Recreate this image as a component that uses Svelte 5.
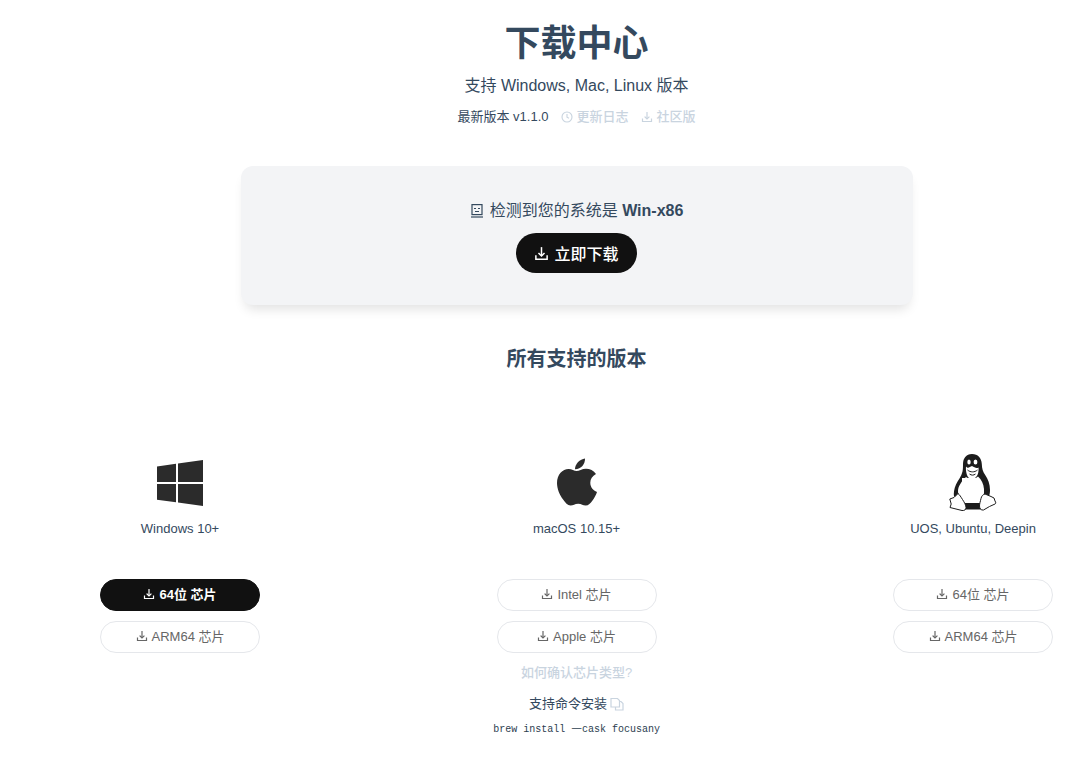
<script>
  const platforms = [
    { name: 'Windows 10+', icon: 'win', builds: [{ label: '64位 芯片', primary: true }, { label: 'ARM64 芯片' }] },
    { name: 'macOS 10.15+', icon: 'mac', builds: [{ label: 'Intel 芯片' }, { label: 'Apple 芯片' }], mac: true },
    { name: 'UOS, Ubuntu, Deepin', icon: 'linux', builds: [{ label: '64位 芯片' }, { label: 'ARM64 芯片' }] }
  ]
</script>

{#snippet dl(size)}
  <svg class="dl" width={size} height={size} viewBox="0 0 24 24" fill="none" stroke="currentColor" stroke-width="2.400" stroke-linecap="square">
    <path d="M3 16v5h18v-5" />
    <path d="M12 3v12" />
    <path d="M8 12l4 4 4-4" />
  </svg>
{/snippet}

<div class="page">
  <header class="head">
    <h1>下载中心</h1>
    <p class="sub">支持 Windows, Mac, Linux 版本</p>
    <div class="meta">
      <span class="ver">最新版本 v1.1.0</span>
      <a href="#log">
        <svg width="12" height="12" viewBox="0 0 24 24" fill="none" stroke="currentColor" stroke-width="2.200"><circle cx="12" cy="12" r="10" /><path d="M12 6v6.500l4 2" /></svg>
        更新日志
      </a>
      <a href="#ce">{@render dl(12)} 社区版</a>
    </div>
  </header>

  <section class="card">
    <div class="detect">
      <svg width="14" height="14" viewBox="0 0 14 14" fill="none" stroke="currentColor" stroke-width="1.200">
        <rect x="2" y="0.600" width="10" height="10" />
        <path d="M1 13h12" />
        <path d="M4 4.500h2M8 4.500h2M5 7.500h4" />
      </svg>
      <span>检测到您的系统是 <b>Win-x86</b></span>
    </div>
    <button class="cta">{@render dl(15)} 立即下载</button>
  </section>

  <h2>所有支持的版本</h2>

  <div class="platforms">
    {#each platforms as p}
      <div class="platform">
        <div class="icon">
          {#if p.icon === 'win'}
            <svg width="46" height="46" viewBox="0 0 46 46" fill="#2b2b2b">
              <path d="M0 6.400L19 3.800V22H0z" />
              <path d="M21 3.500L46 0v22H21z" />
              <path d="M0 24h19v18.300L0 39.700z" />
              <path d="M21 24h25v22l-25-3.500z" />
            </svg>
          {:else if p.icon === 'mac'}
            <svg class="apple" width="40" height="48" viewBox="0 0 40 48" fill="#2b2b2b">
              <path d="M20 0.500c.3 5.500-4 10.800-10 10.700C9.800 6 15 1 20 .5z" transform="translate(8 0)" />
              <path d="M19.500 13c2.500 0 5.500-2.300 9.500-2.300 3.800 0 7.800 1.900 10 5.300-3.700 2.200-5.700 4.900-5.700 8.700 0 4.500 2.800 7.700 6.700 9.200-1 3-2.500 5.800-4.500 8.500-2 2.800-4 5.100-6.800 5.100-2.900 0-4-1.800-7.500-1.800-3.600 0-4.900 1.800-7.700 1.800-3 0-5.100-2.600-7.400-6C2.500 37 0 30.500 0 25c0-8.500 5.600-14 11.600-14 3.200 0 5.800 2 7.900 2z" />
            </svg>
          {:else}
            <svg width="48" height="57" viewBox="0 0 48 57">
              <!-- back and wings -->
              <path fill="#1c1c1c" d="M23 0c6 0 9.500 4 9.800 10 .2 4.500 1 7.500 3.400 11 2.800 4 4.800 9 4.800 15 0 3-.5 5.500-1.500 7l-6.500 1.500-3-1.500V24H13v19l-4 1-4-1.500c-.5-3 0-7.500 2-12 2-4.500 5.500-8 6.500-13 .5-2.500.5-4.500.5-7.500C14 4.500 17 0 23 0z" />
              <!-- belly -->
              <path fill="#fff" d="M17 23c3 2.500 9 2.500 12-.5 3.500 3 5.500 7.500 6 12.500.5 5-1 10-3 15.500H15c-3.500-3-6-8-6-13.500 0-5 4-10 8-14z" />
              <!-- face -->
              <path fill="#fff" d="M17 12.500c2 2.500 3.500 .5 6-.5 2.500 1 4 3 6.500 1.500.5 4.500-1 9-3.500 10.500-2 1.500-4 1.500-6 0-2-1.500-3.500-7-3-11.500z" />
              <path fill="none" stroke="#1c1c1c" stroke-width="1" d="M18.500 16c3 2.500 7 2.500 10 0M20.500 20c2 1.500 4 1.500 6 0" />
              <ellipse cx="20" cy="8" rx="1.700" ry="2.600" fill="#fff" />
              <ellipse cx="26.500" cy="8" rx="1.900" ry="2.600" fill="#fff" />
              <!-- feet -->
              <path fill="#1c1c1c" d="M16 49h16v6.500H16z" />
              <path fill="#fff" stroke="#1c1c1c" stroke-width="1" stroke-linejoin="round" d="M9 39.500L5 43.500 .8 45l1.400 5-1.200 3.500 6 1.500 6 1.500c2.500.3 4-.8 4-3 0-2-1.500-5-3.500-8-1.500-2.300-3-5-4.500-6z" />
              <path fill="#fff" stroke="#1c1c1c" stroke-width="1" stroke-linejoin="round" d="M36 40c-2 .5-3.500 2-4 4.500-.5 2.500-1.500 5-1.500 7.500 0 2.500 1.500 4.500 4 4l6-3.500 5.500-2.500c1-.5 1-1.500 0-3l-1-3-3-1.500C40 42 38 40.500 36 40z" />
            </svg>
          {/if}
        </div>
        <div class="name">{p.name}</div>
        <div class="builds">
          {#each p.builds as b}
            <button class="build" class:primary={b.primary}>{@render dl(12)} {b.label}</button>
          {/each}
        </div>
        {#if p.mac}
          <a class="help" href="#chip">如何确认芯片类型?</a>
          <div class="cmd">
            支持命令安装
            <svg width="14" height="14" viewBox="0 0 14 14" fill="none" stroke="#c9d4df" stroke-width="1.200">
              <path d="M1 1.500h6.500l2 2V10H1z" />
              <path d="M9.500 4.500H11l2 2V13H5.500v-3" />
            </svg>
          </div>
          <code>brew install <span class="dash">—</span>cask focusany</code>
        {/if}
      </div>
    {/each}
  </div>
</div>

<style>
  :global(body) {
    margin: 0;
    background: #fff;
    font-family: "Liberation Sans", "Noto Sans CJK SC", sans-serif;
    color: #34495e;
  }
  .page { padding: 0 35px 0 100px; }
  .head { text-align: center; padding-top: 21px; }
  h1 { margin: 0; font-size: 36px; line-height: 46px; font-weight: 700; }
  .sub { margin: 7px 0 0; font-size: 16px; line-height: 24px; }
  .meta { margin-top: 10px; display: flex; justify-content: center; align-items: center; gap: 12px; font-size: 13px; line-height: 18px; }
  .meta a { color: #c9d4df; text-decoration: none; display: flex; align-items: center; gap: 4px; font-weight: 500; }
  .card {
    width: 672px;
    height: 139px;
    box-sizing: border-box;
    margin: 40px auto 0;
    padding-top: 34px;
    background: #f3f4f6;
    border-radius: 12px;
    box-shadow: 0 8px 12px -4px rgba(0, 0, 0, 0.12);
    text-align: center;
  }
  .detect { display: flex; justify-content: center; align-items: center; gap: 6px; font-size: 16px; line-height: 22px; }
  .cta {
    display: inline-flex;
    align-items: center;
    justify-content: center;
    gap: 5px;
    width: 121px;
    height: 40px;
    margin-top: 11px;
    border: 0;
    border-radius: 20px;
    background: #111;
    color: #fff;
    font: 500 16px "Liberation Sans", "Noto Sans CJK SC", sans-serif;
  }
  h2 { margin: 42px 0 0; text-align: center; font-size: 20px; line-height: 24px; font-weight: 700; }
  .platforms { display: flex; justify-content: space-between; margin-top: 83px; }
  .platform { width: 160px; display: flex; flex-direction: column; align-items: center; }
  .icon { height: 57px; display: flex; align-items: center; justify-content: center; }
  .apple { margin-top: -2px; }
  .name { margin-top: 9px; font-size: 13px; line-height: 18px; white-space: nowrap; }
  .builds { display: flex; flex-direction: column; gap: 10px; margin-top: 41px; }
  .build {
    display: flex;
    align-items: center;
    justify-content: center;
    gap: 4px;
    width: 160px;
    height: 32px;
    padding: 0 0 4px;
    border: 1px solid #e5e7eb;
    border-radius: 16px;
    background: #fff;
    color: #666;
    font: 13px "Liberation Sans", "Noto Sans CJK SC", sans-serif;
  }
  .build .dl { margin-top: 1px; }
  .build.primary { background: #111; border-color: #111; color: #fff; font-weight: 700; }
  .help { margin-top: 11px; color: #c9d4df; font-size: 13px; line-height: 18px; font-weight: 500; text-decoration: none; }
  .cmd { margin-top: 13px; display: flex; align-items: center; gap: 3px; font-size: 13px; line-height: 18px; }
  code { margin-top: 10px; font-family: "Liberation Mono", "Noto Sans CJK SC", monospace; font-size: 10px; line-height: 14px; white-space: nowrap; color: #2c3e50; }
  .dash { font-family: "Noto Sans CJK SC", sans-serif; font-size: 12px; line-height: 0; }
</style>
